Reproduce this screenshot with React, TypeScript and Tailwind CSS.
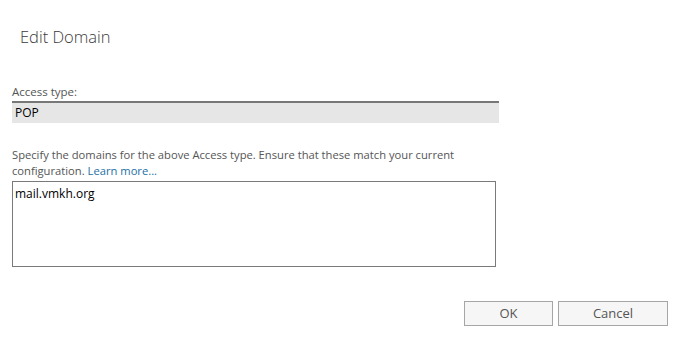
export default function App() {
  return (
    <div className="w-[700px] h-[360px] bg-white text-[#333] font-['Open_Sans','Noto_Sans',sans-serif] flex flex-col">
      <h1 className="pl-[20px] pt-[26px] text-[16.5px] leading-[22px] font-light text-[#3a3a3a]">Edit Domain</h1>

      <div className="pl-[12px] pt-[36px] flex flex-col">
        <label className="text-[11.5px] leading-[16px] text-[#555]">Access type:</label>
        <div className="w-[487px] h-[22px] mt-[1px] bg-[#e6e6e6] border-t-2 border-[#787878] px-[3px] text-[12px] leading-[19px] text-black">
          POP
        </div>

        <div className="mt-[24px] flex flex-col text-[11.2px] leading-[16px] text-[#555]">
          <span>Specify the domains for the above Access type. Ensure that these match your current</span>
          <span className="flex gap-[3px]">
            configuration.
            <a className="text-[#1d6fa5]">Learn more...</a>
          </span>
        </div>
        <div className="mt-[2px] w-[484px] h-[86px] border border-[#7a7a7a] px-[2px] py-[4px] text-[12px] leading-[15px] text-black">
          mail.vmkh.org
        </div>
      </div>

      <div className="flex justify-end gap-[5px] pr-[32px] pt-[34px]">
        <button className="w-[89px] h-[25px] bg-[#f6f6f6] border border-[#a6a6a6] text-[13px] text-[#555]">OK</button>
        <button className="w-[110px] h-[25px] bg-[#f6f6f6] border border-[#a6a6a6] text-[13px] text-[#555]">Cancel</button>
      </div>
    </div>
  );
}
